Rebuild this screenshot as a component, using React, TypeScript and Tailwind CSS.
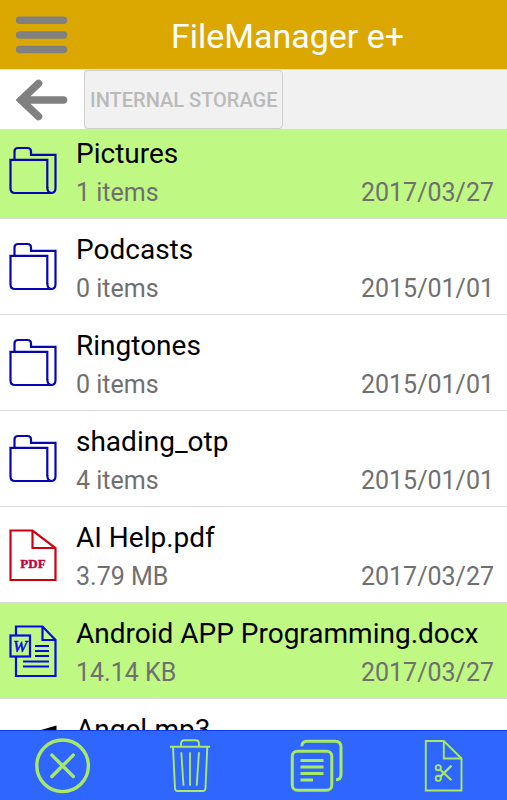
import React, { useState } from 'react';

type EntryKind = 'folder' | 'pdf' | 'word' | 'audio';

interface Entry {
    name: string;
    detail: string;
    date: string;
    kind: EntryKind;
}

const ENTRIES: Entry[] = [
    { name: 'Pictures', detail: '1 items', date: '2017/03/27', kind: 'folder' },
    { name: 'Podcasts', detail: '0 items', date: '2015/01/01', kind: 'folder' },
    { name: 'Ringtones', detail: '0 items', date: '2015/01/01', kind: 'folder' },
    { name: 'shading_otp', detail: '4 items', date: '2015/01/01', kind: 'folder' },
    { name: 'AI Help.pdf', detail: '3.79 MB', date: '2017/03/27', kind: 'pdf' },
    { name: 'Android APP Programming.docx', detail: '14.14 KB', date: '2017/03/27', kind: 'word' },
    { name: 'Angel.mp3', detail: '', date: '', kind: 'audio' },
];

const FolderIcon = () => (
    <svg viewBox="0 0 52 52" className="size-13" fill="none" stroke="#0505b4" strokeWidth="2.2" aria-hidden="true">
        <path d="M39.3 43V14.8H2.5V43.5Q2.5 48 7 48H43Q47.5 48 47.5 43V9.8H23V6.5Q23 3 19.5 3H10Q6.5 3 6.5 6.5V14.8" />
        <path d="M39.3 42Q39.3 48 43.5 48" />
    </svg>
);

const PdfIcon = () => (
    <svg viewBox="0 0 52 52" className="size-13" fill="none" stroke="#cc0010" strokeWidth="2.2" aria-hidden="true">
        <path d="M2.5 1.5H24.5L47.5 19V51H2.5Z" />
        <path d="M24.5 1.5V19H47.5" />
        <text x="25" y="39" textAnchor="middle" fill="#c4003c" stroke="#c4003c" strokeWidth="0.4" className="font-['Liberation_Serif',serif] text-[13px] font-bold">PDF</text>
    </svg>
);

const WordIcon = () => (
    <svg viewBox="0 0 52 52" className="size-13" fill="none" stroke="#0808e8" strokeWidth="2.2" aria-hidden="true">
        <path d="M8 10V1.5H34.5L47.5 15V51H8V32" />
        <path d="M34.5 1.5V15H47.5" />
        <rect x="2.5" y="10.5" width="19.5" height="21" />
        <text x="12" y="27" textAnchor="middle" fill="#0808e8" stroke="#0808e8" strokeWidth="0.5" className="font-['Liberation_Serif',serif] text-[17px] italic">W</text>
        <path d="M27 21H41M27 26H41M27 31H41M15 36.5H41M15 41.5H41" />
    </svg>
);

const AudioIcon = () => (
    <svg viewBox="0 0 52 52" className="size-13" fill="#000" aria-hidden="true">
        <path d="M26 11L48.5 4.5V40H45V14L30 18V45H26Z" />
        <ellipse cx="23" cy="45" rx="7" ry="5" />
        <ellipse cx="42" cy="40" rx="6" ry="5" />
    </svg>
);

const ICONS: Record<EntryKind, React.FC> = {
    folder: FolderIcon,
    pdf: PdfIcon,
    word: WordIcon,
    audio: AudioIcon,
};

const CancelIcon = () => (
    <svg viewBox="0 0 56 56" className="size-14" fill="none" stroke="#a8ea60" strokeWidth="3.4" strokeLinecap="round" aria-hidden="true">
        <circle cx="27.6" cy="27.8" r="25.8" />
        <path d="M16.9 17.1L38.3 38.5M38.3 17.1L16.9 38.5" />
    </svg>
);

const TrashIcon = () => (
    <svg viewBox="0 0 56 56" className="size-14" fill="none" stroke="#a8ea60" strokeWidth="1.9" aria-hidden="true">
        <path d="M8 8.7H48" />
        <path d="M19 8.7V5.7Q19 2.2 22.5 2.2H33.5Q37 2.2 37 5.7V8.7" />
        <path d="M11 8.7L13 50.2Q13.2 53 15.5 53H41Q43.3 53 43.5 50.2L45.3 8.7" />
        <path d="M19.3 14.2L21.5 47.7M28 14.2V47.7M37 14.2L34.7 47.7" />
    </svg>
);

const CopyIcon = () => (
    <svg viewBox="0 0 56 56" className="size-14" fill="none" stroke="#a8ea60" strokeWidth="3" aria-hidden="true">
        <rect x="3.3" y="13.2" width="39.5" height="39" rx="5" />
        <path d="M12.8 8.2Q12.8 3.2 18 3.2H46Q52 3.2 52 9V36.5Q52 41.7 47 41.7" />
        <path d="M11.5 22.5H34.5M11.5 29H34.5M11.5 35.5H34.5M11.5 42H24" />
    </svg>
);

const CutIcon = () => (
    <svg viewBox="0 0 56 56" className="size-14" fill="none" stroke="#a8ea60" strokeWidth="1.9" aria-hidden="true">
        <path d="M9.8 3H27.8L45.5 20.5V52.5H9.8Z" />
        <path d="M27.8 3V20.5H45.5" />
        <circle cx="22.3" cy="29.7" r="2.6" />
        <circle cx="22.3" cy="40.3" r="2.6" />
        <path d="M24.3 31.7L35.5 42.2M24.3 38.6L35.5 27.6" strokeWidth="2.2" />
    </svg>
);

const ACTIONS = [
    { label: 'Cancel selection', Icon: CancelIcon },
    { label: 'Delete', Icon: TrashIcon },
    { label: 'Copy', Icon: CopyIcon },
    { label: 'Cut', Icon: CutIcon },
];

interface EntryRowProps {
    entry: Entry;
    selected: boolean;
    onToggle: () => void;
}

const EntryRow: React.FC<EntryRowProps> = ({ entry, selected, onToggle }) => {
    const Icon = ICONS[entry.kind];
    return (
        <li>
            <button
                type="button"
                aria-pressed={selected}
                onClick={onToggle}
                className={`flex h-24 w-full items-center gap-4 border-b border-[#d8d8d8] pr-[13px] pl-2 text-left ${selected ? 'bg-[#bff883]' : 'bg-white'}`}
            >
                <Icon />
                <span className="min-w-0 flex-1 pt-1.5">
                    <span className="block truncate text-[28px] leading-10 text-black">{entry.name}</span>
                    <span className="flex h-10 justify-between text-[25px] leading-[38px] text-[#707070]">
                        <span>{entry.detail}</span>
                        <span>{entry.date}</span>
                    </span>
                </span>
            </button>
        </li>
    );
};

export default function App() {
    const [selected, setSelected] = useState<string[]>(['Pictures', 'Android APP Programming.docx']);

    const toggle = (name: string) => {
        setSelected(prev => prev.includes(name) ? prev.filter(n => n !== name) : [...prev, name]);
    };

    return (
        <div className="flex h-screen flex-col bg-white font-[Roboto,sans-serif]">
            <header className="flex h-[69px] shrink-0 items-center bg-[#dba802] pl-4">
                <button type="button" aria-label="Menu">
                    <svg viewBox="0 0 52 40" className="h-10 w-13" stroke="#808080" strokeWidth="7.6" strokeLinecap="round" aria-hidden="true">
                        <path d="M3.5 5.2H47.5M3.5 20H47.5M3.5 34.5H47.5" />
                    </svg>
                </button>
                <h1 className="flex-1 pt-0.5 text-center text-[34px] leading-10 text-white">FileManager e+</h1>
            </header>

            <nav className="flex h-15 shrink-0 border-t border-[#e4e4e4] bg-[#f1f1f1]">
                <button type="button" aria-label="Back" className="flex w-21 items-center bg-white pl-4">
                    <svg viewBox="0 0 52 42" className="h-[42px] w-13" fill="none" stroke="#808080" strokeWidth="7.6" strokeLinecap="round" aria-hidden="true">
                        <path d="M22.5 4.5L5 21L22.5 37.5M5 21H47.5" />
                    </svg>
                </button>
                <button type="button" className="rounded border border-[#cfcfcf] px-[5px] text-xl font-medium text-[#bababa]">
                    INTERNAL STORAGE
                </button>
            </nav>

            <main className="min-h-0 flex-1 overflow-hidden">
                <ul className="-mt-1.5">
                    {ENTRIES.map(entry => (
                        <EntryRow
                            key={entry.name}
                            entry={entry}
                            selected={selected.includes(entry.name)}
                            onToggle={() => toggle(entry.name)}
                        />
                    ))}
                </ul>
            </main>

            <footer className="grid h-[70px] shrink-0 grid-cols-4 border-t border-[#0b40e8] bg-[#2f66ff]">
                {ACTIONS.map(({ label, Icon }) => (
                    <button key={label} type="button" aria-label={label} className="flex items-center justify-center">
                        <Icon />
                    </button>
                ))}
            </footer>
        </div>
    );
}
